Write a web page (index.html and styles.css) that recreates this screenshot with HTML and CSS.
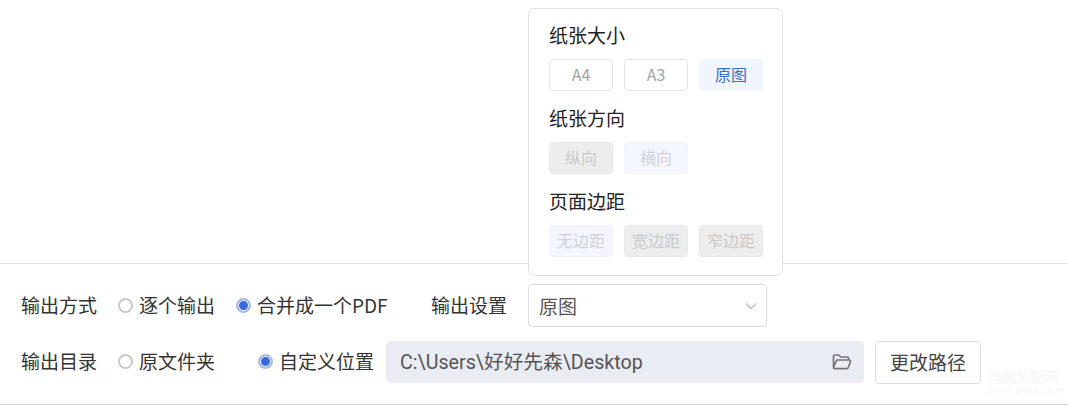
FILE: index.html
```html
<!DOCTYPE html>
<html lang="zh-CN">
<head>
    <meta charset="UTF-8">
    <title>输出设置</title>
    <link rel="stylesheet" href="styles.css">
</head>
<body>
    <div class="preview"></div>
    <div class="panel">
        <div class="row row-first">
            <span class="label">输出方式</span>
            <label class="radio radio-each"><i class="dot"></i>逐个输出</label>
            <label class="radio radio-merge"><i class="dot on"></i>合并成一个PDF</label>
            <span class="label label-set">输出设置</span>
            <div class="select">
                <span>原图</span>
                <svg class="arrow" width="14" height="14" viewBox="0 0 14 14"><path d="M2 4.5 7 9.5 12 4.5" fill="none" stroke="#c4c4c4" stroke-width="1.6"/></svg>
            </div>
        </div>
        <div class="row row-second">
            <span class="label">输出目录</span>
            <label class="radio radio-src"><i class="dot"></i>原文件夹</label>
            <label class="radio radio-custom"><i class="dot on"></i>自定义位置</label>
            <div class="path">
                <span class="path-text">C:\Users\好好先森\Desktop</span>
                <svg width="20" height="18" viewBox="0 0 20 18"><path d="M1.5 14.5V3.2c0-.7.5-1.2 1.2-1.2h4l2 2h6.600c.7 0 1.200.5 1.200 1.200V7M1.500 14.500c0 .7.5 1.200 1.200 1.200h12.300c.6 0 1-.3 1.200-.9l2.200-6.300c.2-.8-.2-1.500-1-1.500H5.500c-.6 0-1 .3-1.200.9L1.500 14.500Z" fill="none" stroke="#777" stroke-width="1.700" stroke-linejoin="round"/></svg>
            </div>
            <button class="btn-change">更改路径</button>
        </div>
    </div>
    <div class="popover">
        <h4>纸张大小</h4>
        <div class="opts">
            <span class="opt">A4</span>
            <span class="opt">A3</span>
            <span class="opt active">原图</span>
        </div>
        <h4>纸张方向</h4>
        <div class="opts">
            <span class="opt off">纵向</span>
            <span class="opt off-active">横向</span>
        </div>
        <h4>页面边距</h4>
        <div class="opts">
            <span class="opt off-active">无边距</span>
            <span class="opt off">宽边距</span>
            <span class="opt off">窄边距</span>
        </div>
    </div>
    <div class="mark">
        <div class="mark-name">电脑装配网</div>
        <div class="mark-url">www.dnzp.com</div>
    </div>
</body>
</html>
```

FILE: styles.css
```css
* {
    box-sizing: border-box;
}
body {
    margin: 0;
    height: 405px;
    overflow: hidden;
    position: relative;
    background: #fff;
    color: #333;
    font-family: "Noto Sans CJK SC", "Noto Sans", sans-serif;
    font-size: 19px;
}
.preview {
    height: 264px;
    border-bottom: 1px solid #dedede;
}
.panel {
    height: 141px;
    border-bottom: 1px solid #d8d8d8;
    padding: 20px 0 0 21px;
}
.row {
    display: flex;
    align-items: center;
}
.row-first {
    height: 43px;
}
.row-second {
    height: 42px;
    margin-top: 14px;
}
.label {
    width: 76px;
    padding-bottom: 2px;
    white-space: nowrap;
    line-height: 1;
}
.label-set {
    margin-left: 43px;
    margin-right: 21px;
}
.radio {
    display: flex;
    align-items: center;
    padding-bottom: 2px;
    white-space: nowrap;
    line-height: 1;
}
.row-second .label,
.row-second .radio {
    padding-bottom: 4px;
}
.dot {
    flex-shrink: 0;
    width: 15px;
    height: 15px;
    margin-top: 2px;
    margin-right: 6px;
    border: 2px solid #c8c8c8;
    border-radius: 50%;
    background: #fff;
}
.dot.on {
    border-color: #a9bbee;
    background: #3a68e0;
    box-shadow: inset 0 0 0 1px #fff;
}
.radio-each {
    margin-left: 21px;
    width: 118px;
}
.radio-merge {
    width: 152px;
}
.radio-src {
    margin-left: 21px;
    width: 140px;
}
.radio-custom {
    width: 128px;
}
.select {
    width: 239px;
    height: 43px;
    display: flex;
    align-items: center;
    justify-content: space-between;
    padding: 0 8px 0 10px;
    border: 1px solid #dcdcdc;
    border-radius: 4px;
    color: #555;
}
.path {
    width: 478px;
    height: 42px;
    display: flex;
    align-items: center;
    justify-content: space-between;
    padding: 0 12px 0 14px;
    background: #e9ecf3;
    border-radius: 5px;
    color: #555;
    font-family: Roboto, "Noto Sans CJK SC", sans-serif;
    font-size: 19.7px;
}
.path-text {
    padding-bottom: 4px;
}
.btn-change {
    flex-shrink: 0;
    width: 106px;
    height: 43px;
    margin-left: 11px;
    padding: 0 0 2px;
    border: 1px solid #dcdcdc;
    border-radius: 4px;
    background: #fff;
    color: #444;
    font: inherit;
}
.popover {
    position: absolute;
    left: 528px;
    top: 8px;
    width: 255px;
    height: 268px;
    padding: 15px 19px 0 20px;
    background: #fff;
    border: 1px solid #e0e0e0;
    border-radius: 7px;
}
.popover h4 {
    margin: 0;
    height: 22px;
    line-height: 22px;
    font-size: 19px;
    font-weight: 400;
    color: #222;
}
.opts {
    display: flex;
    gap: 11px;
    margin: 13px 0 16px;
}
.opt {
    flex-shrink: 0;
    width: 64px;
    height: 32px;
    line-height: 28px;
    text-align: center;
    font-size: 16px;
    color: #a3a3a3;
    border: 1px solid #e6e6e6;
    border-radius: 4px;
}
.opt.active {
    background: #f1f5fe;
    border-color: #f1f5fe;
    color: #3f6bd0;
}
.opt.off {
    background: #ededed;
    border-color: #e8e8e8;
    color: #c9c9c9;
}
.opt.off-active {
    background: #f3f6fe;
    border-color: #f0f3fc;
    color: #cfd2da;
}
.mark {
    position: absolute;
    left: 988px;
    top: 369px;
    color: #f5f5f5;
    line-height: 1;
}
.mark-name {
    font-size: 14px;
}
.mark-url {
    margin-top: 3px;
    font-size: 8px;
    letter-spacing: 1.500px;
}
```
